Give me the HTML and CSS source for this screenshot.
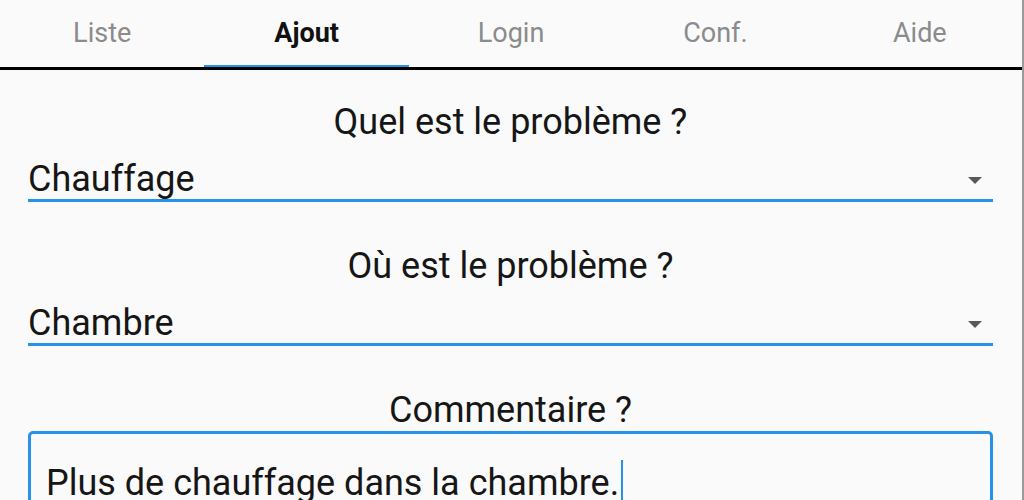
FILE: index.html
```html
<!DOCTYPE html>
<html lang="fr">
<head>
<meta charset="utf-8">
<title>Ajout</title>
<link rel="stylesheet" href="styles.css">
</head>
<body>
<div class="app">
  <nav class="tabs">
    <div class="tab">Liste</div>
    <div class="tab active">Ajout</div>
    <div class="tab">Login</div>
    <div class="tab">Conf.</div>
    <div class="tab">Aide</div>
  </nav>
  <main class="form">
    <div class="label first">Quel est le problème ?</div>
    <div class="select">
      <span class="value">Chauffage</span>
      <span class="arrow"></span>
    </div>
    <div class="label">Où est le problème ?</div>
    <div class="select">
      <span class="value">Chambre</span>
      <span class="arrow"></span>
    </div>
    <div class="label">Commentaire ?</div>
    <div class="textarea">
      <span class="text">Plus de chauffage dans la chambre.</span><span class="caret"></span>
    </div>
  </main>
</div>
</body>
</html>
```

FILE: styles.css
```css
html, body {
  margin: 0;
  padding: 0;
  background: #fafafa;
}

body {
  font-family: Roboto, "Noto Sans", "Liberation Sans", sans-serif;
  color: #161616;
  height: 500px;
  overflow: hidden;
}

.app {
  width: 1022px;
  height: 500px;
  border-right: 2px solid #9a9a9a;
  overflow: hidden;
}

.tabs {
  display: flex;
  border-bottom: 3px solid #000;
}

.tab {
  flex: 1;
  height: 67px;
  box-sizing: border-box;
  padding-bottom: 2px;
  display: flex;
  align-items: center;
  justify-content: center;
  font-size: 27px;
  color: #8b8b8b;
}

.tab.active {
  color: #111;
  font-weight: 700;
  border-bottom: 2px solid #2692e8;
  padding-bottom: 0;
}

.form {
  padding: 0 29px 0 28px;
}

.label {
  margin-top: 43px;
  font-size: 36px;
  line-height: 42px;
  text-align: center;
  color: #161616;
}

.label.first {
  margin-top: 31px;
}

.select {
  margin-top: 14px;
  height: 42px;
  border-bottom: 3px solid #2692e8;
  display: flex;
  align-items: center;
  justify-content: space-between;
  padding-right: 11px;
}

.value {
  font-size: 36px;
  line-height: 42px;
  padding-top: 2px;
  color: #161616;
}

.arrow {
  width: 0;
  height: 0;
  border-left: 7px solid transparent;
  border-right: 7px solid transparent;
  border-top: 7px solid #595959;
  margin-top: 4px;
}

.textarea {
  margin-top: 0;
  height: 120px;
  border: 3px solid #2692e8;
  border-radius: 5px;
  padding: 28px 15px 0 15px;
  font-size: 36px;
  line-height: 42px;
  color: #161616;
  display: flex;
  align-items: flex-start;
}

.caret {
  display: inline-block;
  width: 2px;
  height: 44px;
  margin-top: -2px;
  margin-left: 2px;
  background: #2692e8;
}
```
